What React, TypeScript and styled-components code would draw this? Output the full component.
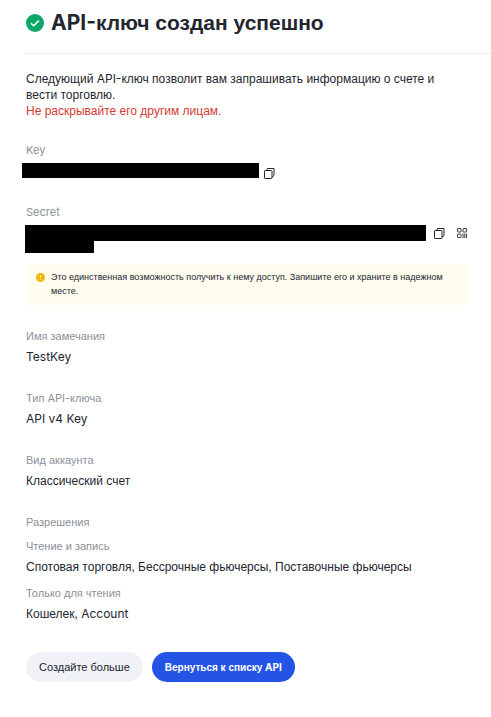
import React from "react";
import styled, { createGlobalStyle } from "styled-components";

const GlobalStyle = createGlobalStyle`
  * { box-sizing: border-box; }
  body {
    margin: 0;
    background: #fff;
    color: #23262f;
    font-family: "Liberation Sans", Arial, sans-serif;
    font-size: 12px;
    line-height: 16px;
  }
`;

const Page = styled.main`
  padding: 8px 0 36px 26px;
`;

const Header = styled.header`
  display: flex;
  align-items: center;
  gap: 7px;
  padding-bottom: 15px;
  border-bottom: 1px solid #ececee;
`;

const Title = styled.h1`
  margin: 0;
  font-size: 21px;
  line-height: 30px;
  font-weight: 700;
`;

const Latin = styled.span`
  font-family: Inter, sans-serif;
  line-height: 1;
`;

const Content = styled.div`
  padding-right: 24px;
`;

const Intro = styled.p`
  margin: 17px 0 0;
`;

const Warning = styled.p`
  margin: 0;
  color: #d33a31;
`;

const Credential = styled.section<{ $gap: number }>`
  margin-top: ${(p) => p.$gap}px;
`;

const Label = styled.h2`
  margin: 0;
  color: #8c9099;
  font-size: 11px;
  line-height: 16px;
  font-weight: 400;
`;

const SecretRow = styled.div<{ $shift: number; $gap: number }>`
  display: flex;
  align-items: flex-start;
  gap: ${(p) => p.$gap}px;
  margin: 5px 0 0 -${(p) => p.$shift}px;
`;

const Redacted = styled.div`
  flex: 0 1 auto;
  min-width: 0;
`;

const Bar = styled.div<{ $width: number; $height: number }>`
  width: ${(p) => p.$width}px;
  max-width: 100%;
  height: ${(p) => p.$height}px;
  background: #000;
`;

const IconButton = styled.button<{ $top: number }>`
  display: flex;
  flex: none;
  margin: ${(p) => p.$top}px 0 0;
  padding: 0;
  border: 0;
  background: none;
  color: #23262f;
  cursor: pointer;
`;

const IconGroup = styled.div`
  display: flex;
  gap: 12px;
`;

const Notice = styled.aside`
  display: flex;
  gap: 6px;
  margin-top: 11px;
  padding: 6px 10px 7px;
  border-radius: 4px;
  background: #fffcf0;
  font-size: 9px;
  line-height: 14px;

  svg {
    flex: none;
    margin-top: 3px;
  }
`;

const NoticeText = styled.p`
  margin: 0;
`;

const Details = styled.dl`
  margin: 23px 0 0;
`;

const Detail = styled.div`
  margin-bottom: 24px;
`;

const Term = styled.dt`
  color: #8c9099;
  font-size: 11px;
  line-height: 16px;
`;

const Value = styled.dd`
  margin: 5px 0 0;
  line-height: 17px;
`;

const Permissions = styled.section`
  display: grid;
  gap: 8px;
`;

const PermissionList = styled.dl`
  display: grid;
  gap: 9px;
  margin: 0;
`;

const Actions = styled.div`
  display: flex;
  flex-wrap: wrap;
  gap: 9px;
  margin-top: 29px;
`;

const Action = styled.button<{ $primary?: boolean }>`
  height: 30px;
  padding: 0 13px;
  border: 0;
  border-radius: 15px;
  background: ${(p) => (p.$primary ? "#2354e6" : "#f1f2f7")};
  color: ${(p) => (p.$primary ? "#fff" : "#23262f")};
  font-family: inherit;
  font-size: ${(p) => (p.$primary ? 10 : 11)}px;
  font-weight: ${(p) => (p.$primary ? 700 : 400)};
  cursor: pointer;
`;

const CheckIcon = () => (
  <svg width="18" height="18" viewBox="0 0 18 18" aria-hidden="true">
    <circle cx="9" cy="9" r="9" fill="#0ba768" />
    <path d="M5 9.2l2.7 2.6 5.1-5.2" fill="none" stroke="#fff" strokeWidth="1.5" />
  </svg>
);

const CopyIcon = () => (
  <svg width="11" height="11" viewBox="0 0 11 11" fill="none" stroke="currentColor" aria-hidden="true">
    <rect x="0.5" y="2.5" width="7.5" height="8" rx="0.6" />
    <path d="M2.8 2.5L3.4.5H10v7L8 9" />
  </svg>
);

const QrIcon = () => (
  <svg width="10" height="10" viewBox="0 0 10 10" fill="none" stroke="currentColor" strokeWidth="0.9" aria-hidden="true">
    <rect x="0.5" y="0.5" width="3.5" height="3.5" rx="0.5" />
    <rect x="6" y="0.5" width="3.5" height="3.5" rx="0.5" />
    <rect x="0.5" y="6" width="3.5" height="3.5" rx="0.5" />
    <path d="M6 5.5V10M7.8 5.5V10M9.5 5.5V10" />
  </svg>
);

const AlertIcon = () => (
  <svg width="9" height="9" viewBox="0 0 9 9" aria-hidden="true">
    <circle cx="4.5" cy="4.5" r="4.5" fill="#f5b50a" />
    <path d="M4.5 2v3M4.5 6v1" stroke="#fff3c4" strokeWidth="0.9" />
  </svg>
);

const DetailRow = ({ term, children }: { term: React.ReactNode; children: React.ReactNode }) => (
  <Detail>
    <Term>{term}</Term>
    <Value>{children}</Value>
  </Detail>
);

export default function App() {
  return (
    <>
      <GlobalStyle />
      <Page>
        <Header>
          <CheckIcon />
          <Title><Latin>API-</Latin>ключ создан успешно</Title>
        </Header>
        <Content>
          <Intro>
            Следующий <Latin>API-</Latin>ключ позволит вам запрашивать информацию о счете и вести торговлю.
          </Intro>
          <Warning>Не раскрывайте его другим лицам.</Warning>

          <Credential $gap={23}>
            <Label><Latin>Key</Latin></Label>
            <SecretRow $shift={4} $gap={5}>
              <Redacted><Bar $width={237} $height={15} /></Redacted>
              <IconButton $top={5} type="button" aria-label="Copy key"><CopyIcon /></IconButton>
            </SecretRow>
          </Credential>

          <Credential $gap={25}>
            <Label><Latin>Secret</Latin></Label>
            <SecretRow $shift={1} $gap={8}>
              <Redacted>
                <Bar $width={401} $height={16} />
                <Bar $width={69} $height={12} />
              </Redacted>
              <IconGroup>
                <IconButton $top={3} type="button" aria-label="Copy secret"><CopyIcon /></IconButton>
                <IconButton $top={3} type="button" aria-label="Show QR code"><QrIcon /></IconButton>
              </IconGroup>
            </SecretRow>
          </Credential>

          <Notice>
            <AlertIcon />
            <NoticeText>
              Это единственная возможность получить к нему доступ. Запишите его и храните в надежном месте.
            </NoticeText>
          </Notice>

          <Details>
            <DetailRow term="Имя замечания"><Latin>TestKey</Latin></DetailRow>
            <DetailRow term={<>Тип <Latin>API-</Latin>ключа</>}><Latin>API v4 Key</Latin></DetailRow>
            <DetailRow term="Вид аккаунта">Классический счет</DetailRow>
          </Details>

          <Permissions>
            <Label>Разрешения</Label>
            <PermissionList>
              <div>
                <Term>Чтение и запись</Term>
                <Value>Спотовая торговля, Бессрочные фьючерсы, Поставочные фьючерсы</Value>
              </div>
              <div>
                <Term>Только для чтения</Term>
                <Value>Кошелек, <Latin>Account</Latin></Value>
              </div>
            </PermissionList>
          </Permissions>

          <Actions>
            <Action type="button">Создайте больше</Action>
            <Action type="button" $primary>Вернуться к списку <Latin>API</Latin></Action>
          </Actions>
        </Content>
      </Page>
    </>
  );
}
